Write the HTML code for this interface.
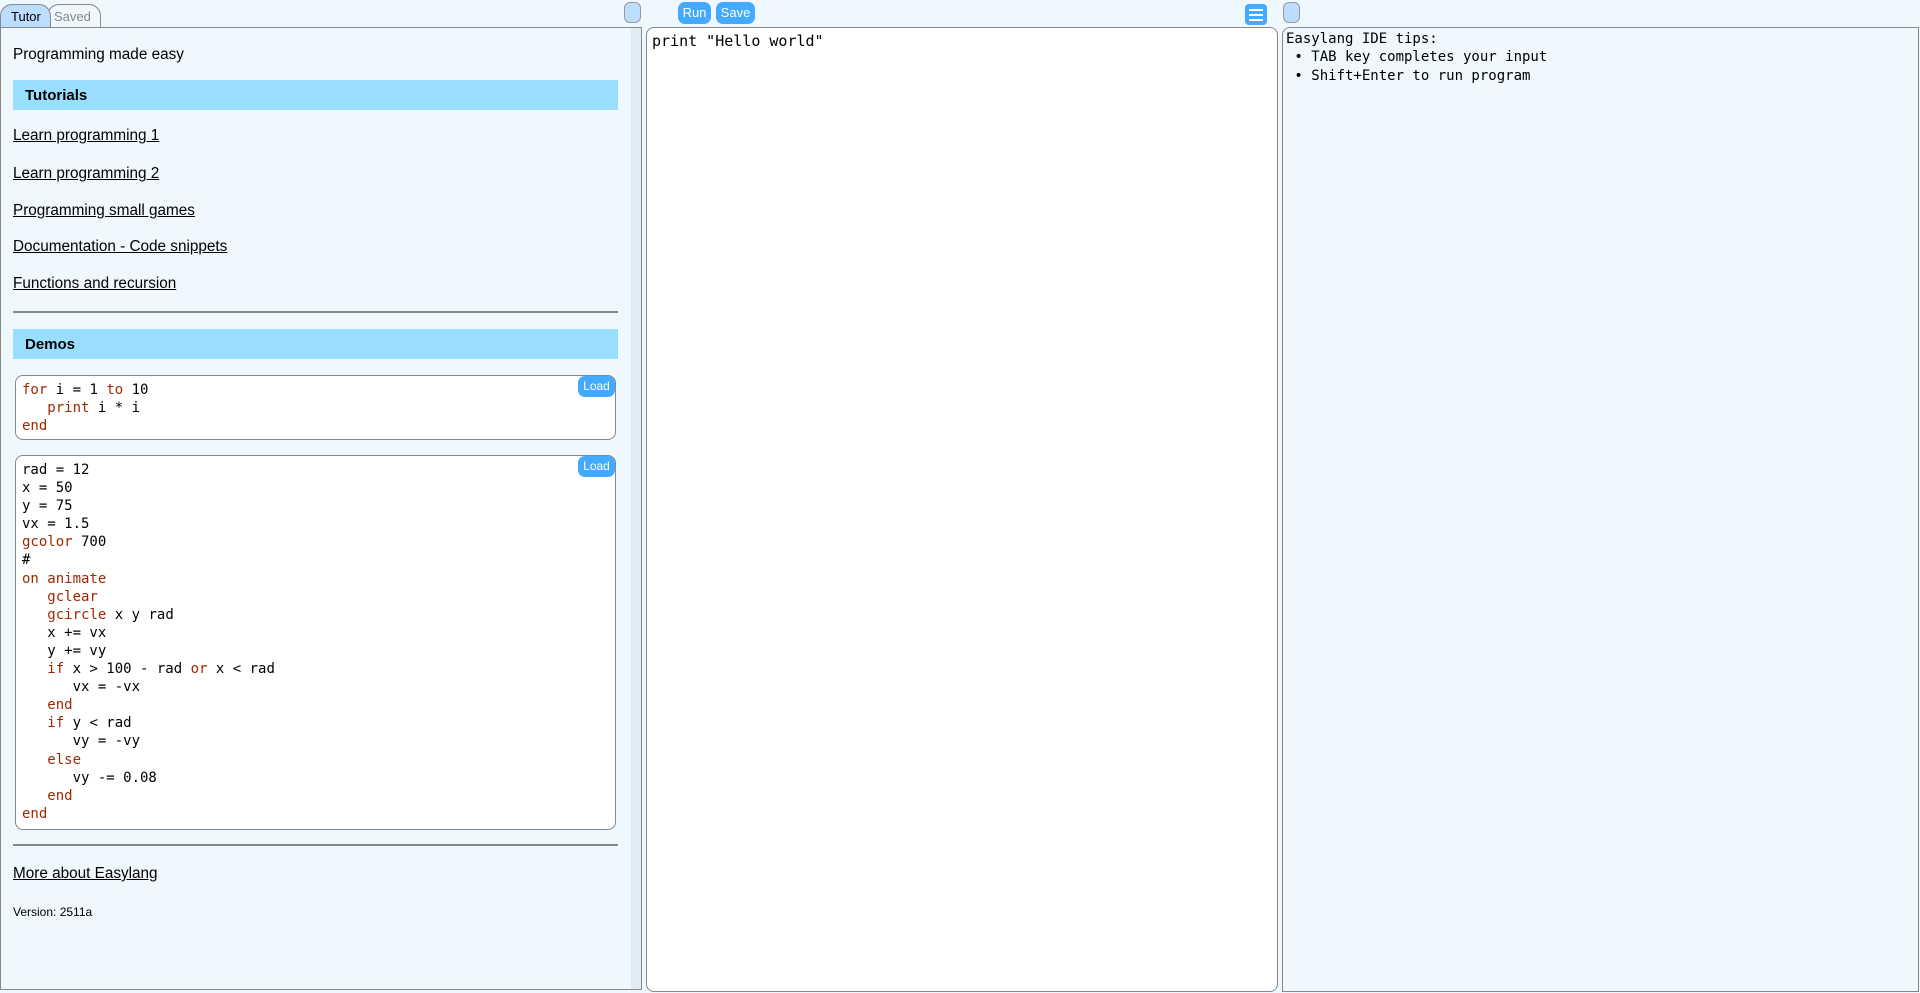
<!DOCTYPE html>
<html><head><meta charset="utf-8"><style>
*{box-sizing:border-box}
body{margin:0;width:1920px;height:993px;background:#eff7ff;font-family:"Liberation Sans",sans-serif;position:relative;overflow:hidden}
.abs{position:absolute}
.tab{position:absolute;top:4px;height:24px;border:1px solid #888;border-bottom:none;border-radius:12px 12px 0 0;font-size:13px;line-height:24px;padding:0 8px}
#left{left:0;top:27px;width:642px;height:963px;border:1px solid #888;background:#eff7ff}
#sb{left:631px;top:28px;width:10px;height:961px;background:#e2ecf5}
.h{position:absolute;left:13px;width:605px;height:30px;background:#99ddff;font-weight:bold;font-size:15px;line-height:31px;padding-left:12px}
.lnk{position:absolute;left:13px;font-size:15.3px;text-decoration:underline;color:#000}
.hr{position:absolute;left:13px;width:605px;height:2px;background:#888}
.code{position:absolute;left:15px;width:601px;background:#fff;border:1px solid #888;border-radius:8px;font-family:"DejaVu Sans Mono","Liberation Mono",monospace;font-size:14px;line-height:18.1px;padding:5px 6px;white-space:pre}
.k{color:#a12800}
.load{position:absolute;right:0;top:0;width:37px;height:21px;background:#44aaff;color:#fff;border-radius:7px;font-family:"Liberation Sans",sans-serif;font-size:12px;line-height:21px;text-align:center}
.btn{position:absolute;top:2px;height:22px;background:#44aaff;color:#fff;border-radius:7px;font-size:13px;line-height:22px;text-align:center}
.hd{position:absolute;top:2px;width:17px;height:21px;background:#bbddff;border:1px solid #999;border-radius:6px}
#ed{left:646px;top:27px;width:632px;height:965px;background:#fff;border:1px solid #888;border-radius:8px;font-family:"DejaVu Sans Mono",monospace;font-size:15px;padding:4px 5px}
#rt{left:1282px;top:27px;width:637px;height:965px;background:#eff7ff;border:1px solid #888;border-radius:8px 0 0 0;font-family:"DejaVu Sans Mono",monospace;font-size:14px;line-height:18.3px;padding:2px 3px;white-space:pre}
</style></head><body>
<div class="tab" style="left:47px;width:54px;color:#888;background:#eff7ff;padding-left:6px">Saved</div>
<div class="tab" style="left:0;width:51px;background:#bbddff;padding-left:10px">Tutor</div>
<div class="hd" style="left:624px"></div>
<div class="btn" style="left:678px;width:33px">Run</div>
<div class="btn" style="left:716px;width:39px">Save</div>
<div class="abs" style="left:1245px;top:4px;width:22px;height:21px;background:#44aaff;border-radius:4px">
<div class="abs" style="left:4px;top:5px;width:14px;height:1.5px;background:#fff"></div>
<div class="abs" style="left:4px;top:10px;width:14px;height:1.5px;background:#fff"></div>
<div class="abs" style="left:4px;top:15px;width:14px;height:1.5px;background:#fff"></div></div>
<div class="hd" style="left:1283px"></div>

<div id="left" class="abs"></div>
<div id="sb" class="abs"></div>
<div class="abs" style="left:13px;top:46px;font-size:15.3px">Programming made easy</div>
<div class="h" style="top:80px">Tutorials</div>
<div class="lnk" style="top:127px">Learn programming 1</div>
<div class="lnk" style="top:165px">Learn programming 2</div>
<div class="lnk" style="top:202px">Programming small games</div>
<div class="lnk" style="top:238px">Documentation - Code snippets</div>
<div class="lnk" style="top:275px">Functions and recursion</div>
<div class="hr" style="top:311px"></div>
<div class="h" style="top:329px">Demos</div>
<div class="code" style="top:375px;height:65px"><span class="k">for</span> i = 1 <span class="k">to</span> 10
   <span class="k">print</span> i * i
<span class="k">end</span><div class="load">Load</div></div>
<div class="code" style="top:455px;height:375px">rad = 12
x = 50
y = 75
vx = 1.5
<span class="k">gcolor</span> 700
#
<span class="k">on animate</span>
   <span class="k">gclear</span>
   <span class="k">gcircle</span> x y rad
   x += vx
   y += vy
   <span class="k">if</span> x &gt; 100 - rad <span class="k">or</span> x &lt; rad
      vx = -vx
   <span class="k">end</span>
   <span class="k">if</span> y &lt; rad
      vy = -vy
   <span class="k">else</span>
      vy -= 0.08
   <span class="k">end</span>
<span class="k">end</span><div class="load">Load</div></div>
<div class="hr" style="top:844px"></div>
<div class="lnk" style="top:865px">More about Easylang</div>
<div class="abs" style="left:13px;top:905px;font-size:12px">Version: 2511a</div>

<div id="ed" class="abs">print "Hello world"</div>
<div id="rt" class="abs">Easylang IDE tips:
 • TAB key completes your input
 • Shift+Enter to run program</div>
</body></html>
